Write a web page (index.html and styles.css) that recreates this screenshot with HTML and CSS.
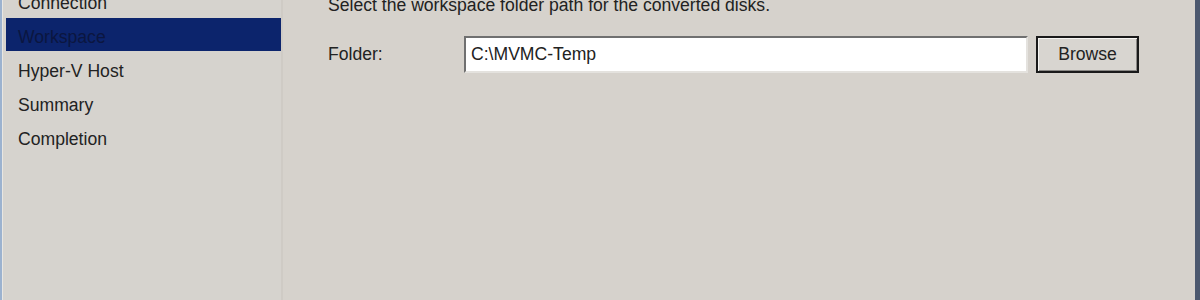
FILE: index.html
```html
<!DOCTYPE html>
<html>
<head>
<meta charset="utf-8">
<link rel="stylesheet" href="styles.css">
</head>
<body>
<div class="window">
  <nav class="sidebar">
    <ul class="steps">
      <li class="step">Connection</li>
      <li class="step active">Workspace</li>
      <li class="step">Hyper-V Host</li>
      <li class="step">Summary</li>
      <li class="step">Completion</li>
    </ul>
  </nav>
  <main class="content">
    <p class="intro">Select the workspace folder path for the converted disks.</p>
    <div class="row">
      <label class="label">Folder:</label>
      <div class="textbox">C:\MVMC-Temp</div>
      <button class="button">Browse</button>
    </div>
  </main>
</div>
</body>
</html>
```

FILE: styles.css
```css
html, body {
  margin: 0;
  padding: 0;
  width: 1200px;
  height: 300px;
  overflow: hidden;
  background: #d5d1cb;
}

.window {
  display: flex;
  height: 300px;
  border-left: 2px solid #9cb2cf;
  border-right: 5px solid #4c586e;
  box-sizing: border-box;
  font-family: "Liberation Sans", Arial, sans-serif;
  font-size: 17.6px;
  color: #222;
}

.sidebar {
  width: 275px;
  padding-left: 3px;
  border-left: 1px solid #e8e6e2;
  background: #d6d3ce;
  border-right: 2px solid #cfcbc5;
  flex-shrink: 0;
}

.steps {
  list-style: none;
  margin: -16px 0 0 0;
  padding: 0;
}

.step {
  height: 30px;
  padding-top: 4px;
  line-height: 30px;
  padding-left: 12px;
}

.step.active {
  background: #0c246c;
  color: #0b1640;
  height: 29px;
  margin-bottom: 1px;
}

.content {
  flex: 1;
  padding-left: 45px;
  background: #d6d2cc;
}

.intro {
  margin: -5px 0 0 0;
  line-height: 20px;
}

.row {
  display: flex;
  align-items: center;
  margin-top: 21px;
}

.label {
  width: 136px;
}

.textbox {
  width: 555px;
  height: 33px;
  line-height: 32px;
  padding-left: 5px;
  background: #fff;
  border-top: 2px solid #707070;
  border-left: 2px solid #707070;
  border-right: 2px solid #e4e2de;
  border-bottom: 2px solid #e4e2de;
  color: #222;
}

.button {
  margin-left: 8px;
  width: 103px;
  height: 37px;
  font-family: inherit;
  font-size: 17.6px;
  color: #222;
  background: #d8d5d0;
  border: 2px solid #1a1a1a;
  box-shadow: inset 1px 1px 0 #f6f5f2, inset -1px -1px 0 #8a8885;
  padding: 0;
}
```
